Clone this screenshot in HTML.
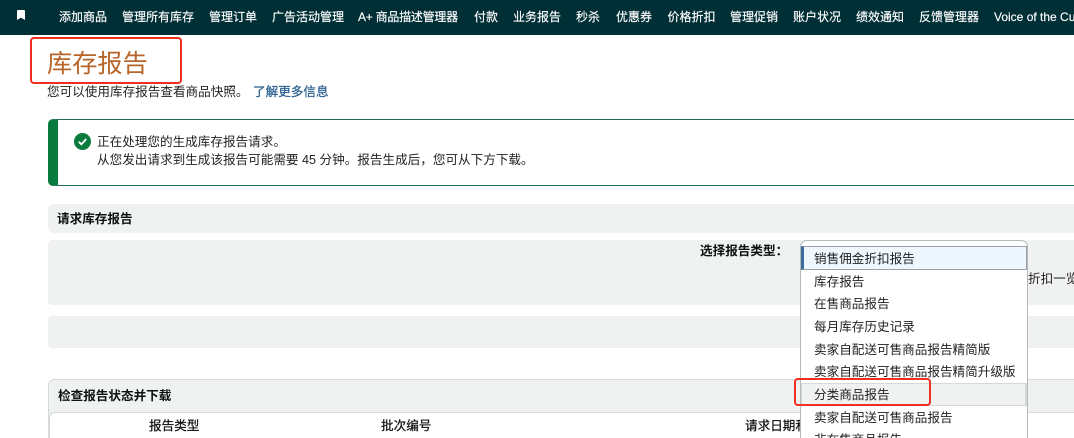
<!DOCTYPE html>
<html lang="zh">
<head>
<meta charset="utf-8">
<style>
html,body{margin:0;padding:0;background:#fff;width:1074px;height:438px;overflow:hidden}
#root{position:relative;width:1074px;height:438px;overflow:hidden;font-family:"Liberation Sans","Noto Sans CJK SC",sans-serif;font-size:12.6px;color:#0f1111;background:#fff}
.a{position:absolute;white-space:nowrap}
.t{position:absolute;white-space:nowrap;line-height:18px;height:18px}
#nav{position:absolute;left:0;top:0;width:1074px;height:35px;background:#002f36;overflow:hidden}
#nav span{position:absolute;top:7.5px;line-height:18px;font-size:12px;color:#fff;white-space:nowrap;-webkit-text-stroke:.15px #fff}
.b{font-weight:700}
.m{-webkit-text-stroke:.25px #0f1111}
.panel{position:absolute;left:48px;width:1040px;background:#f0f2f2}
.red{position:absolute;box-sizing:border-box;border:2.5px solid #ee2f22;border-radius:4px;z-index:5}
.opt{position:absolute;left:13px;line-height:18px;white-space:nowrap;color:#222}
</style>
</head>
<body>
<div id="root">
<div id="nav">
<svg class="a" style="left:17px;top:10px" width="8" height="10" viewBox="0 0 8 10"><path d="M0 1 Q0 0 1 0 H7 Q8 0 8 1 V10 L4 7.6 L0 10 Z" fill="#fff"/></svg>
<span style="left:59px">添加商品</span>
<span style="left:122px">管理所有库存</span>
<span style="left:209px">管理订单</span>
<span style="left:272px">广告活动管理</span>
<span style="left:358px;letter-spacing:-.25px">A+ 商品描述管理器</span>
<span style="left:474px">付款</span>
<span style="left:513px">业务报告</span>
<span style="left:576px">秒杀</span>
<span style="left:616px">优惠券</span>
<span style="left:667.5px">价格折扣</span>
<span style="left:730px">管理促销</span>
<span style="left:793px">账户状况</span>
<span style="left:856px">绩效通知</span>
<span style="left:919px">反馈管理器</span>
<span style="left:994px">Voice of the Customer</span>
</div>

<div class="red" style="left:30px;top:37px;width:152px;height:47px"></div>
<div class="a" style="left:47px;top:46px;font-size:25.2px;line-height:36px;color:#b8652a">库存报告</div>
<div class="t" style="left:47px;top:83px;color:#222">您可以使用库存报告查看商品快照。</div>
<div class="t" style="left:253px;top:83px;color:#2a5f8f;-webkit-text-stroke:.25px #2a5f8f">了解更多信息</div>

<div class="a" style="left:48px;top:119px;width:1040px;height:67px;box-sizing:border-box;border:1px solid #1f6f4f;border-left:10px solid #0a7b3e;border-radius:5px"></div>
<svg class="a" style="left:74px;top:133px" width="17" height="17" viewBox="0 0 17 17"><circle cx="8.5" cy="8.5" r="8.5" fill="#0a7b3e"/><path d="M4.8 8.8 L7.4 11.3 L12.2 6" fill="none" stroke="#fff" stroke-width="1.8"/></svg>
<div class="t" style="left:97px;top:133px;color:#222">正在处理您的生成库存报告请求。</div>
<div class="t" style="left:97px;top:151px;color:#222">从您发出请求到生成该报告可能需要 45 分钟。报告生成后，您可从下方下载。</div>

<div class="panel" style="top:204px;height:29px;border-radius:5px"></div>
<div class="t b" style="left:57px;top:210px">请求库存报告</div>

<div class="panel" style="top:240px;height:65px;border-radius:4px"></div>
<div class="t b" style="left:700px;top:242px">选择报告类型：</div>
<div class="t" style="left:1028px;top:270px;color:#222">折扣一览</div>

<div class="panel" style="top:316px;height:32px;border-radius:4px"></div>

<div class="a" style="left:48px;top:379px;width:1040px;height:70px;box-sizing:border-box;border:1px solid #d5d9d9;border-radius:6px;background:#f0f2f2"></div>
<div class="t b" style="left:58px;top:387px">检查报告状态并下载</div>
<div class="a" style="left:49px;top:412px;width:1040px;height:30px;box-sizing:border-box;background:#fff;border-top:1px solid #d5d9d9;border-left:1px solid #d5d9d9;border-radius:6px 0 0 0"></div>
<div class="t m" style="left:149px;top:417px">报告类型</div>
<div class="t m" style="left:381px;top:417px">批次编号</div>
<div class="t m" style="left:745px;top:417px">请求日期和</div>

<div class="a" style="left:800px;top:240px;width:228px;height:210px;box-sizing:border-box;background:#fff;border:1px solid #b5b9b9;border-radius:7px 7px 0 0;overflow:hidden;z-index:3">
  <div class="a" style="left:0;top:5px;width:226px;height:24px;box-sizing:border-box;background:#edf7fd;border:1px solid #9aa0a4;border-left:3px solid #3d6c9e"></div>
  <div class="a" style="left:0;top:142px;width:226px;height:22.5px;box-sizing:border-box;background:#f0f2f2;border:1px solid #d5d9d9;border-right-width:2px"></div>
  <div class="opt" style="top:8.5px">销售佣金折扣报告</div>
  <div class="opt" style="top:31.5px">库存报告</div>
  <div class="opt" style="top:54.2px">在售商品报告</div>
  <div class="opt" style="top:76.5px">每月库存历史记录</div>
  <div class="opt" style="top:99.5px">卖家自配送可售商品报告精简版</div>
  <div class="opt" style="top:122.2px">卖家自配送可售商品报告精简升级版</div>
  <div class="opt" style="top:144.5px">分类商品报告</div>
  <div class="opt" style="top:167.5px">卖家自配送可售商品报告</div>
  <div class="opt" style="top:190px">非在售商品报告</div>
</div>
<div class="red" style="left:794px;top:378px;width:137px;height:27.5px"></div>
</div>
</body>
</html>
